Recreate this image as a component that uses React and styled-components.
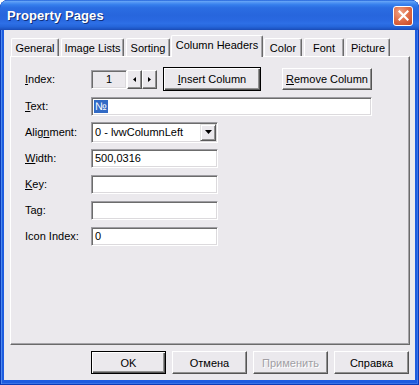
import React from 'react';
import styled, { createGlobalStyle } from 'styled-components';

const FACE = '#EBE9ED';

const GlobalStyle = createGlobalStyle`
  html, body {
    margin: 0;
    padding: 0;
    background: #ffffff;
  }
  body {
    font-family: "Liberation Sans", Arial, sans-serif;
    font-size: 11px;
    color: #000;
  }
  * {
    box-sizing: border-box;
  }
`;

function App() {
  return (
    <>
      <GlobalStyle />
      <Window>
        <TitleBar>
          <Title>Property Pages</Title>
          <CloseButton aria-label="Close">
            <svg width="11" height="11" viewBox="0 0 11 11">
              <path d="M1.5 1.5 L9.5 9.5 M9.5 1.5 L1.5 9.5" stroke="#fff" strokeWidth="2.2" strokeLinecap="square" />
            </svg>
          </CloseButton>
        </TitleBar>

        <Body>
          <TabRow>
            <Tab $w={48}>General</Tab>
            <Tab $w={63}>Image Lists</Tab>
            <Tab $w={44}>Sorting</Tab>
            <Tab $w={92} $active>Column Headers</Tab>
            <Tab $w={38}>Color</Tab>
            <Tab $w={40}>Font</Tab>
            <Tab $w={44}>Picture</Tab>
          </TabRow>

          <Panel>
            <Row $first>
              <Label><u>I</u>ndex:</Label>
              <Field $w={36} $h={19} $bg={FACE} $center>1</Field>
              <SpinButton>
                <svg width="3" height="5" viewBox="0 0 3 5"><polygon points="3,0 3,5 0,2.5" fill="#000" /></svg>
              </SpinButton>
              <SpinButton>
                <svg width="3" height="5" viewBox="0 0 3 5"><polygon points="0,0 0,5 3,2.5" fill="#000" /></svg>
              </SpinButton>
              <Button $w={98} $h={24} $default style={{ marginLeft: 6 }}>
                <u>I</u>nsert Column
              </Button>
              <Button $w={90} $h={22} style={{ marginLeft: 21 }}>
                <u>R</u>emove Column
              </Button>
            </Row>

            <Row>
              <Label><u>T</u>ext:</Label>
              <Field $w={281} $h={19}>
                <Selected>№</Selected>
              </Field>
            </Row>

            <Row>
              <Label>Alig<u>n</u>ment:</Label>
              <Field $w={127} $h={21}>
                <SelectText>0 - lvwColumnLeft</SelectText>
                <DropButton>
                  <svg width="7" height="4" viewBox="0 0 7 4"><polygon points="0,0 7,0 3.5,4" fill="#000" /></svg>
                </DropButton>
              </Field>
            </Row>

            <Row>
              <Label><u>W</u>idth:</Label>
              <Field $w={127} $h={19}>500,0316</Field>
            </Row>

            <Row>
              <Label><u>K</u>ey:</Label>
              <Field $w={127} $h={19} />
            </Row>

            <Row>
              <Label>Tag:</Label>
              <Field $w={127} $h={19} />
            </Row>

            <Row>
              <Label>Icon Index:</Label>
              <Field $w={127} $h={19}>0</Field>
            </Row>
          </Panel>

          <ButtonRow>
            <Button $w={75} $h={23} $default>OK</Button>
            <Button $w={75} $h={23}>Отмена</Button>
            <Button $w={75} $h={23} $disabled>Применить</Button>
            <Button $w={75} $h={23}>Справка</Button>
          </ButtonRow>
        </Body>
      </Window>
    </>
  );
}

const Window = styled.div`
  width: 419px;
  height: 385px;
  display: flex;
  flex-direction: column;
  background: #1d5ce0;
  border-radius: 8px 8px 0 0;
  overflow: hidden;
  box-shadow:
    inset 1px 0 #0a3bb8,
    inset -1px 0 #0a3bb8,
    inset 0 -1px #0a3bb8,
    inset 2px 0 #4f8aee,
    inset -2px 0 #3a74e6,
    inset 0 -2px #3a74e6;
`;

const TitleBar = styled.div`
  height: 30px;
  flex-shrink: 0;
  display: flex;
  align-items: center;
  justify-content: space-between;
  padding: 1px 7px 0 7px;
  border-radius: 8px 8px 0 0;
  background: linear-gradient(
    to bottom,
    #1f5fd9 0%,
    #62a2f6 5%,
    #4f93f3 9%,
    #357eec 16%,
    #2b6de2 26%,
    #2766dd 50%,
    #2968e0 66%,
    #2d6fe6 78%,
    #2666db 88%,
    #1f58c8 95%,
    #1a4bb4 100%
  );
`;

const Title = styled.span`
  font-family: "Liberation Sans", Arial, sans-serif;
  font-weight: bold;
  font-size: 13px;
  color: #fff;
  text-shadow: 1px 1px #10307a;
  letter-spacing: 0.1px;
`;

const CloseButton = styled.div`
  width: 20px;
  height: 20px;
  margin-right: -1px;
  border: 1px solid #fff;
  border-radius: 3px;
  display: flex;
  align-items: center;
  justify-content: center;
  background: radial-gradient(circle at 35% 30%, #f0a487 0%, #e1714c 45%, #c94420 100%);
`;

const Body = styled.div`
  flex: 1;
  margin: 0 4px 5px 4px;
  background: ${FACE};
  padding: 5px 5px 6px 6px;
  display: flex;
  flex-direction: column;
`;

const TabRow = styled.div`
  height: 21px;
  flex-shrink: 0;
  display: flex;
  align-items: flex-end;
  gap: 2px;
  padding-left: 1px;
  position: relative;
  z-index: 2;
`;

const Tab = styled.div`
  width: ${(p) => p.$w}px;
  height: ${(p) => (p.$active ? 22 : 18)}px;
  margin: 0 ${(p) => (p.$active ? '-1px' : '0')} ${(p) => (p.$active ? '-1px' : '0')};
  padding-bottom: ${(p) => (p.$active ? 3 : 0)}px;
  display: flex;
  align-items: center;
  justify-content: center;
  background: ${FACE};
  border-left: 1px solid #fff;
  border-top: 1px solid #fff;
  border-right: 1px solid #6a6a6a;
  border-radius: 2px 2px 0 0;
  box-shadow: inset -1px 0 #a5a4a8;
  white-space: nowrap;
`;

const Panel = styled.div`
  flex: 1;
  position: relative;
  z-index: 1;
  display: flex;
  flex-direction: column;
  border: 1px solid;
  border-color: #fff #6a6a6a #6a6a6a #fff;
  box-shadow: inset -1px -1px #a5a4a8;
  padding: 9px 0 0 14px;
`;

const Row = styled.div`
  height: 26px;
  display: flex;
  align-items: center;
  margin-bottom: ${(p) => (p.$first ? 1 : 0)}px;
`;

const Label = styled.span`
  width: 66px;
  flex-shrink: 0;
  white-space: nowrap;
`;

const Field = styled.div`
  width: ${(p) => p.$w}px;
  height: ${(p) => p.$h}px;
  flex-shrink: 0;
  display: flex;
  align-items: center;
  justify-content: ${(p) => (p.$center ? 'center' : 'flex-start')};
  padding: 1px 1px 1px ${(p) => (p.$center ? 1 : 3)}px;
  background: ${(p) => p.$bg || '#fff'};
  border: 1px solid;
  border-color: #9e9da2 #fff #fff #9e9da2;
  box-shadow: inset 1px 1px #6c6c6c, inset -1px -1px #dcdadd;
  white-space: nowrap;
`;

const Selected = styled.span`
  background: #316ac5;
  color: #fff;
  padding: 0 1px;
  line-height: 13px;
  margin-left: -1px;
`;

const SelectText = styled.span`
  flex: 1;
`;

const DropButton = styled.div`
  width: 16px;
  height: 17px;
  flex-shrink: 0;
  display: flex;
  align-items: center;
  justify-content: center;
  background: ${FACE};
  border: 1px solid;
  border-color: #e3e3e3 #5a5a5a #5a5a5a #e3e3e3;
  box-shadow: inset 1px 1px #fff, inset -1px -1px #909090;
`;

const SpinButton = styled.div`
  width: 15px;
  height: 19px;
  flex-shrink: 0;
  display: flex;
  align-items: center;
  justify-content: center;
  background: ${FACE};
  border: 1px solid;
  border-color: #fff #5a5a5a #5a5a5a #fff;
  box-shadow: inset -1px -1px #909090;
`;

const Button = styled.button`
  width: ${(p) => p.$w}px;
  height: ${(p) => p.$h}px;
  flex-shrink: 0;
  padding: 0;
  font-family: inherit;
  font-size: 11px;
  color: ${(p) => (p.$disabled ? '#a19fa4' : '#000')};
  text-shadow: ${(p) => (p.$disabled ? '1px 1px #fff' : 'none')};
  background: ${FACE};
  border: 1px solid;
  border-color: ${(p) => (p.$default ? '#000' : '#fff #555 #555 #fff')};
  box-shadow: ${(p) =>
    p.$default
      ? 'inset 1px 1px #fff, inset -1px -1px #555, inset -2px -2px #909090'
      : 'inset -1px -1px #909090'};
  white-space: nowrap;
`;

const ButtonRow = styled.div`
  flex-shrink: 0;
  display: flex;
  justify-content: flex-end;
  gap: 6px;
  margin-top: 6px;
  padding-right: 1px;
`;

export default App;
